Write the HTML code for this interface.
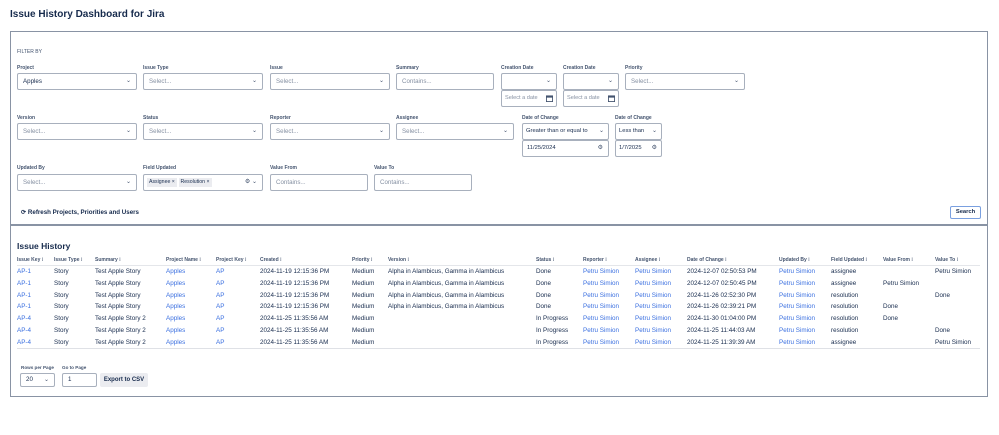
<!DOCTYPE html>
<html><head><meta charset="utf-8"><style>
*{box-sizing:border-box;margin:0;padding:0}
body{width:999px;height:435px;background:#fff;font-family:"Liberation Sans",sans-serif;color:#172b4d;position:relative;overflow:hidden}
.a{position:absolute;white-space:nowrap}
.lbl{position:absolute;font-size:5px;font-weight:bold;color:#44546f;white-space:nowrap}
.in{position:absolute;height:17px;border:1px solid #a8b0bd;border-radius:2px;background:#fff;font-size:6.2px;color:#8590a2;padding-left:5px;line-height:15px;white-space:nowrap}
.in.v{color:#172b4d}
.ch{position:absolute;right:5px;top:0;font-size:6px;color:#44546f}
.panel{position:absolute;border:1px solid #6b778c}
.th{position:absolute;top:257px;font-size:5px;font-weight:bold;color:#44546f;white-space:nowrap}
.td{position:absolute;font-size:6.3px;color:#172b4d;white-space:nowrap}
.lk{color:#3a6fe0}
.ic{position:absolute;right:5px;top:4px;width:7px;height:7px}
</style></head><body>
<div class="a" style="left:10px;top:9px;font-size:10px;font-weight:bold">Issue History Dashboard for Jira</div>
<div class="panel" style="left:10px;top:31px;width:978px;height:194px;border-color:#8993a4"></div>
<div class="panel" style="left:10px;top:225px;width:978px;height:172px;border-color:#8993a4"></div>
<div class="a" style="left:17px;top:49px;font-size:5px;color:#44546f">FILTER BY</div>

<div class="lbl" style="left:17px;top:65px">Project</div>
<div class="in v" style="left:17px;top:73px;width:120px">Apples<span class="ch">⌄</span></div>
<div class="lbl" style="left:143px;top:65px">Issue Type</div>
<div class="in" style="left:143px;top:73px;width:120px">Select...<span class="ch">⌄</span></div>
<div class="lbl" style="left:270px;top:65px">Issue</div>
<div class="in" style="left:270px;top:73px;width:120px">Select...<span class="ch">⌄</span></div>
<div class="lbl" style="left:396px;top:65px">Summary</div>
<div class="in" style="left:396px;top:73px;width:98px">Contains...</div>
<div class="lbl" style="left:501px;top:65px">Creation Date</div>
<div class="in" style="left:501px;top:73px;width:56px"><span class="ch">⌄</span></div>
<div class="in" style="left:501px;top:90px;width:56px;font-size:5.6px;padding-left:3px">Select a date<svg class="ic" style="right:3px" viewBox="0 0 8 8"><rect x="0.5" y="1" width="7" height="6.5" fill="none" stroke="#44546f"/><rect x="0.5" y="1" width="7" height="2" fill="#44546f"/></svg></div>
<div class="lbl" style="left:563px;top:65px">Creation Date</div>
<div class="in" style="left:563px;top:73px;width:56px"><span class="ch">⌄</span></div>
<div class="in" style="left:563px;top:90px;width:56px;font-size:5.6px;padding-left:3px">Select a date<svg class="ic" style="right:3px" viewBox="0 0 8 8"><rect x="0.5" y="1" width="7" height="6.5" fill="none" stroke="#44546f"/><rect x="0.5" y="1" width="7" height="2" fill="#44546f"/></svg></div>
<div class="lbl" style="left:625px;top:65px">Priority</div>
<div class="in" style="left:625px;top:73px;width:120px">Select...<span class="ch">⌄</span></div>

<div class="lbl" style="left:17px;top:115px">Version</div>
<div class="in" style="left:17px;top:123px;width:120px">Select...<span class="ch">⌄</span></div>
<div class="lbl" style="left:143px;top:115px">Status</div>
<div class="in" style="left:143px;top:123px;width:120px">Select...<span class="ch">⌄</span></div>
<div class="lbl" style="left:270px;top:115px">Reporter</div>
<div class="in" style="left:270px;top:123px;width:120px">Select...<span class="ch">⌄</span></div>
<div class="lbl" style="left:396px;top:115px">Assignee</div>
<div class="in" style="left:396px;top:123px;width:118px">Select...<span class="ch">⌄</span></div>
<div class="lbl" style="left:522px;top:115px">Date of Change</div>
<div class="in v" style="left:522px;top:123px;width:87px;font-size:5.8px;padding-left:3px">Greater than or equal to<span class="ch" style="right:4px">⌄</span></div>
<div class="in v" style="left:522px;top:140px;width:87px;font-size:5.8px;padding-left:4px">11/25/2024<span class="ch">⚙</span></div>
<div class="lbl" style="left:615px;top:115px">Date of Change</div>
<div class="in v" style="left:615px;top:123px;width:47px;font-size:5.8px;padding-left:3px">Less than<span class="ch" style="right:4px">⌄</span></div>
<div class="in v" style="left:615px;top:140px;width:47px;font-size:5.8px;padding-left:3px">1/7/2025<span class="ch" style="right:4px">⚙</span></div>

<div class="lbl" style="left:17px;top:165px">Updated By</div>
<div class="in" style="left:17px;top:174px;width:120px">Select...<span class="ch">⌄</span></div>
<div class="lbl" style="left:143px;top:165px">Field Updated</div>
<div class="in" style="left:143px;top:174px;width:120px;padding-left:3px"><span style="display:inline-block;background:#ebecf0;color:#172b4d;font-size:5.2px;line-height:9px;padding:0 2px;margin-top:3px;vertical-align:top">Assignee ×</span> <span style="display:inline-block;background:#ebecf0;color:#172b4d;font-size:5.2px;line-height:9px;padding:0 2px;margin-top:3px;vertical-align:top">Resolution ×</span><span class="ch">⚙ ⌄</span></div>
<div class="lbl" style="left:270px;top:165px">Value From</div>
<div class="in" style="left:270px;top:174px;width:98px">Contains...</div>
<div class="lbl" style="left:374px;top:165px">Value To</div>
<div class="in" style="left:374px;top:174px;width:98px">Contains...</div>

<div class="a" style="left:21px;top:209px;font-size:6.2px;font-weight:bold">⟳ Refresh Projects, Priorities and Users</div>
<div class="a" style="left:950px;top:206px;width:31px;height:13px;border:1px solid #7aa0e0;border-radius:2px;font-size:5.8px;font-weight:bold;text-align:center;line-height:11px">Search</div>

<div class="a" style="left:17px;top:241px;font-size:8.5px;font-weight:bold">Issue History</div>
<div class="th" style="left:17px">Issue Key ⁝</div>
<div class="th" style="left:54px">Issue Type ⁝</div>
<div class="th" style="left:95px">Summary ⁝</div>
<div class="th" style="left:166px">Project Name ⁝</div>
<div class="th" style="left:216px">Project Key ⁝</div>
<div class="th" style="left:260px">Created ⁝</div>
<div class="th" style="left:352px">Priority ⁝</div>
<div class="th" style="left:388px">Version ⁝</div>
<div class="th" style="left:536px">Status ⁝</div>
<div class="th" style="left:583px">Reporter ⁝</div>
<div class="th" style="left:635px">Assignee ⁝</div>
<div class="th" style="left:687px">Date of Change ⁝</div>
<div class="th" style="left:779px">Updated By ⁝</div>
<div class="th" style="left:831px">Field Updated ⁝</div>
<div class="th" style="left:883px">Value From ⁝</div>
<div class="th" style="left:935px">Value To ⁝</div>
<div class="a" style="left:17px;top:265px;width:963px;border-top:1px solid #e4e6ea"></div>
<div class="a" style="left:17px;top:348px;width:963px;border-top:1px solid #dfe1e6"></div>

<div id="rows"></div>
<script>
var R=[
["AP-1","Test Apple Story","2024-11-19 12:15:36 PM","Alpha in Alambicus, Gamma in Alambicus","Done","2024-12-07 02:50:53 PM","assignee","","Petru Simion"],
["AP-1","Test Apple Story","2024-11-19 12:15:36 PM","Alpha in Alambicus, Gamma in Alambicus","Done","2024-12-07 02:50:45 PM","assignee","Petru Simion",""],
["AP-1","Test Apple Story","2024-11-19 12:15:36 PM","Alpha in Alambicus, Gamma in Alambicus","Done","2024-11-26 02:52:30 PM","resolution","","Done"],
["AP-1","Test Apple Story","2024-11-19 12:15:36 PM","Alpha in Alambicus, Gamma in Alambicus","Done","2024-11-26 02:39:21 PM","resolution","Done",""],
["AP-4","Test Apple Story 2","2024-11-25 11:35:56 AM","","In Progress","2024-11-30 01:04:00 PM","resolution","Done",""],
["AP-4","Test Apple Story 2","2024-11-25 11:35:56 AM","","In Progress","2024-11-25 11:44:03 AM","resolution","","Done"],
["AP-4","Test Apple Story 2","2024-11-25 11:35:56 AM","","In Progress","2024-11-25 11:39:39 AM","assignee","","Petru Simion"]];
var h="";
R.forEach(function(r,i){var y=268+i*11.8;
function c(x,t,l){h+='<div class="td'+(l?' lk':'')+'" style="left:'+x+'px;top:'+y+'px">'+t+'</div>';}
c(17,r[0],1);c(54,"Story");c(95,r[1]);c(166,"Apples",1);c(216,"AP",1);c(260,r[2]);c(352,"Medium");c(388,r[3]);c(536,r[4]);c(583,"Petru Simion",1);c(635,"Petru Simion",1);c(687,r[5]);c(779,"Petru Simion",1);c(831,r[6]);c(883,r[7]);c(935,r[8]);});
document.getElementById("rows").innerHTML=h;
</script>

<div class="lbl" style="left:21px;top:365px;font-size:4.6px">Rows per Page</div>
<div class="in v" style="left:20px;top:373px;width:35px;height:14px;line-height:12px">20<span class="ch">⌄</span></div>
<div class="lbl" style="left:62px;top:365px;font-size:4.6px">Go to Page</div>
<div class="in v" style="left:62px;top:373px;width:35px;height:14px;line-height:12px">1</div>
<div class="a" style="left:100px;top:373px;width:48px;height:14px;background:#ebecf0;border-radius:2px;font-size:6px;font-weight:bold;text-align:center;line-height:14px">Export to CSV</div>
</body></html>
